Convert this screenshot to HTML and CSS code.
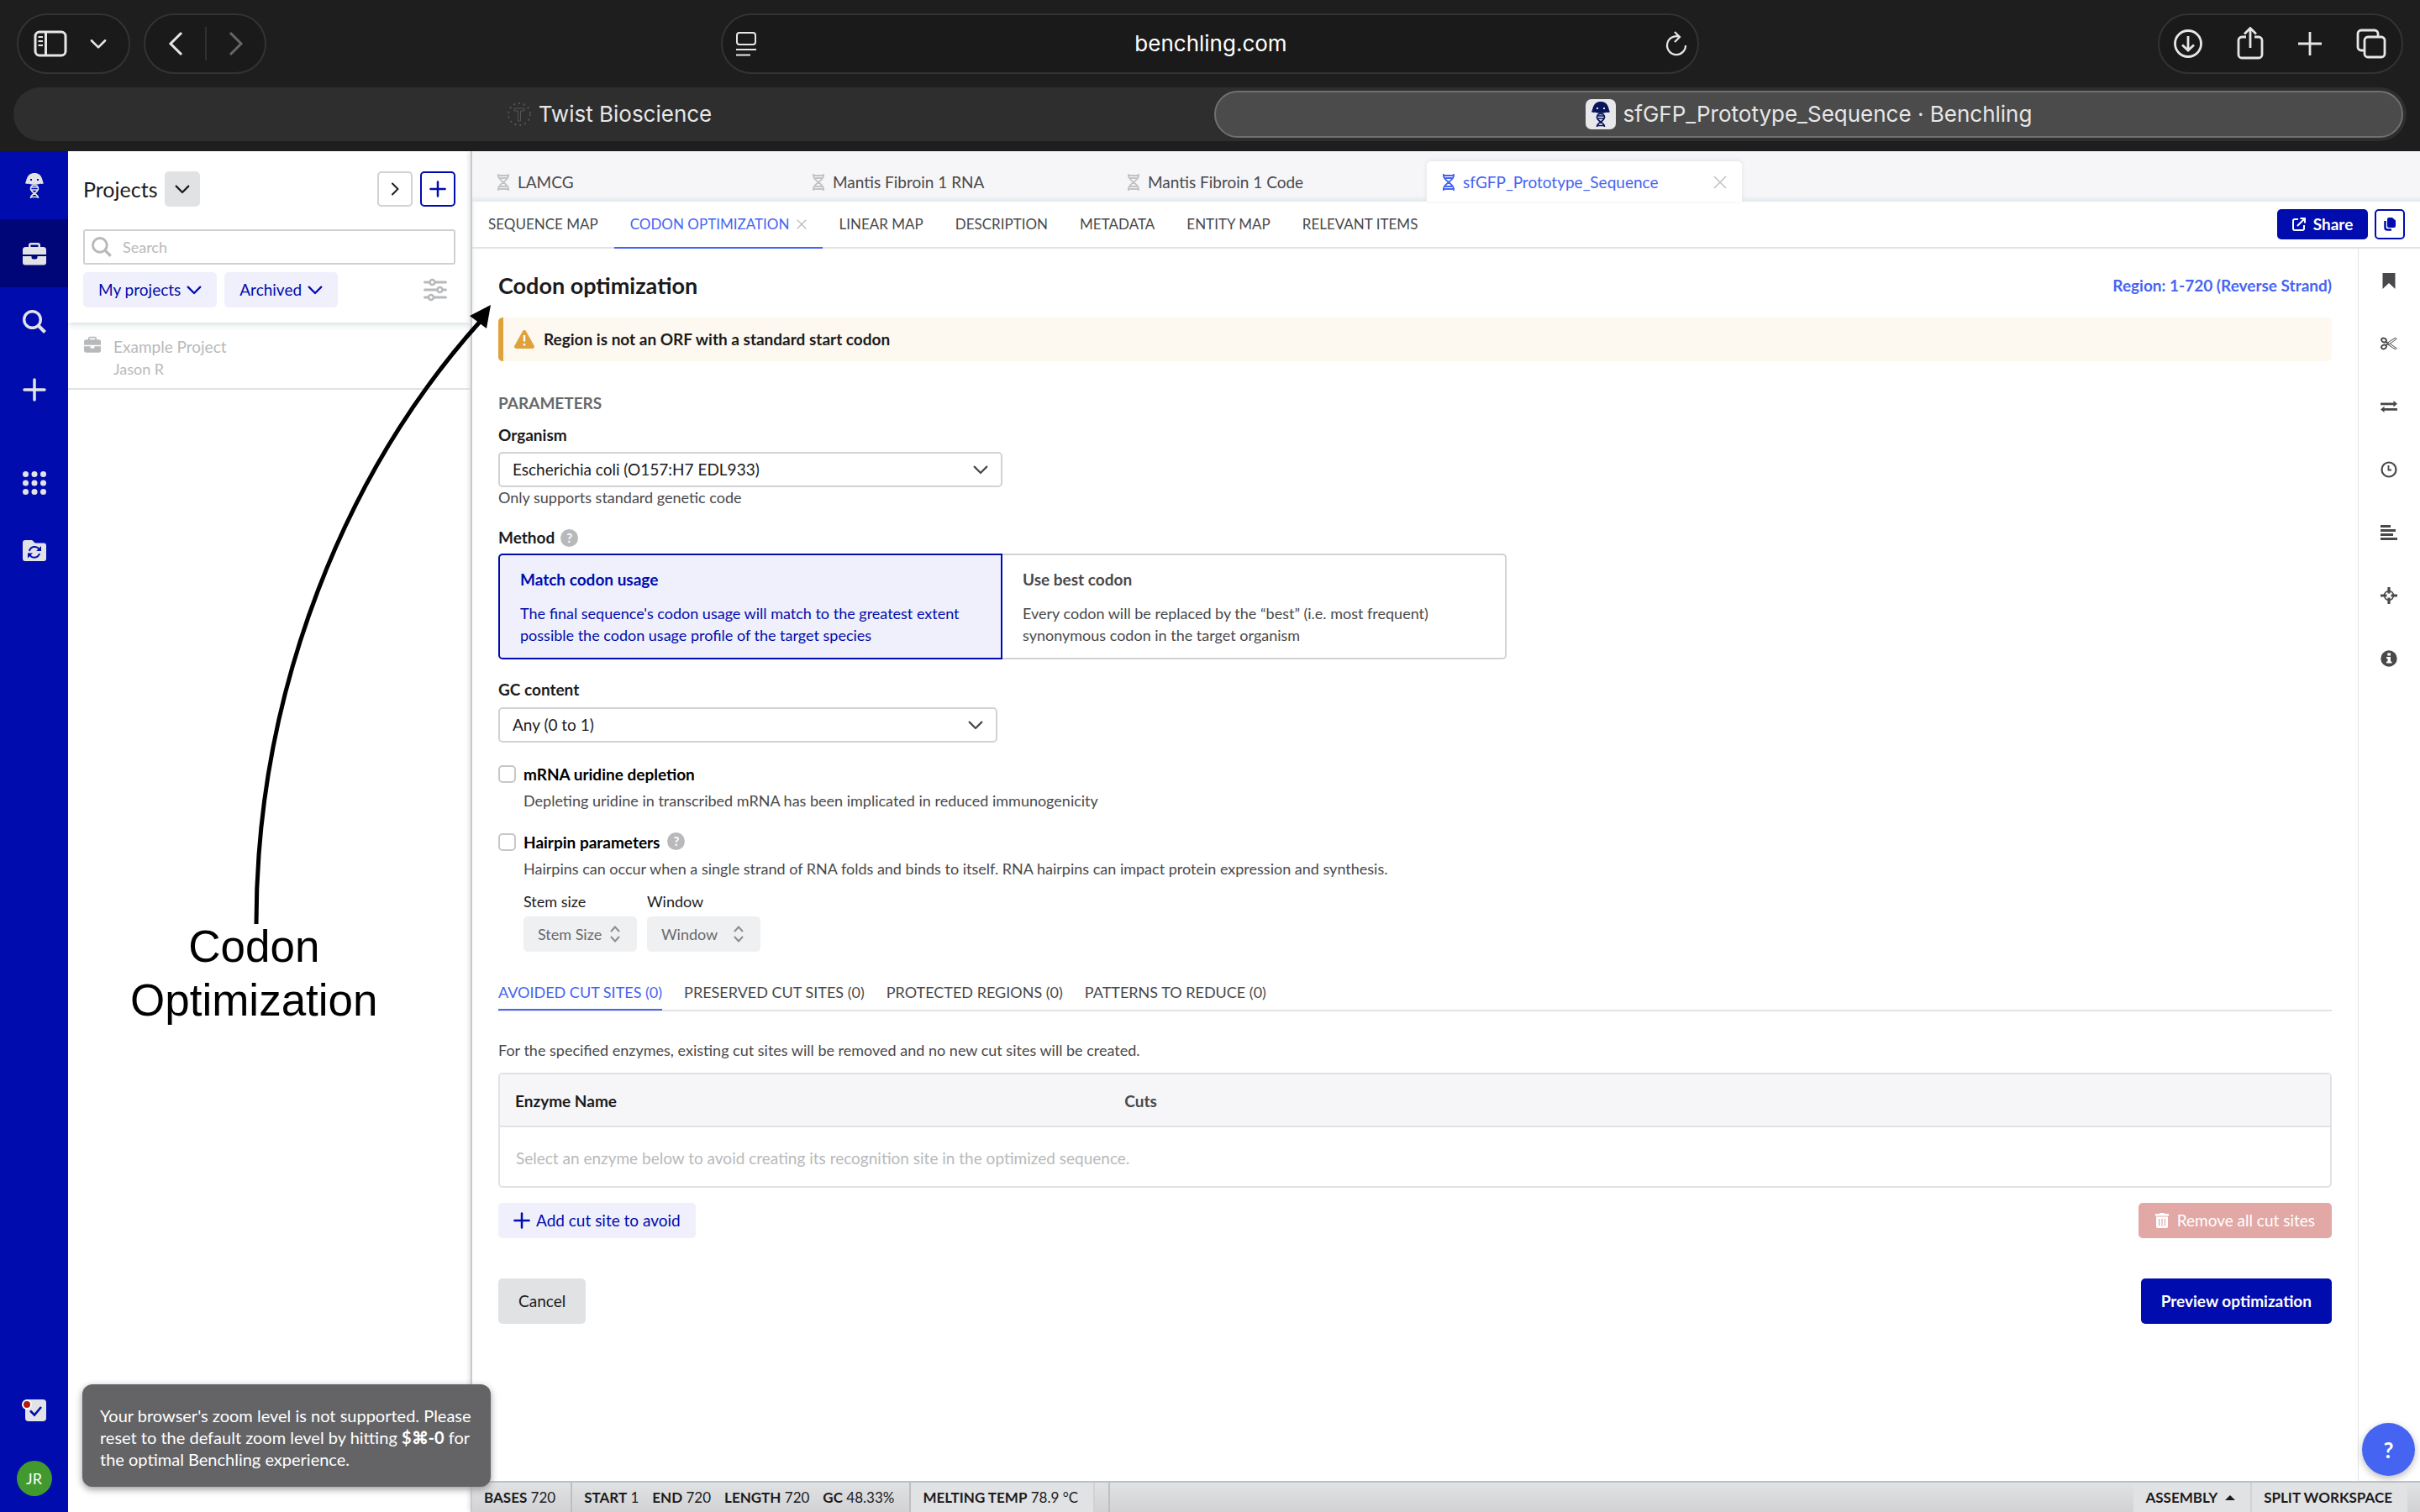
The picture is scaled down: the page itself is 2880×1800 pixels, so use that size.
FILE: index.html
```html
<!DOCTYPE html>
<html lang="en">
<head>
    <meta charset="UTF-8">
    <meta name="viewport" content="width=device-width, initial-scale=1.0">
    <title>sfGFP_Prototype_Sequence · Benchling</title>
    <link rel="stylesheet" href="styles.css">
</head>
<body>
    <!-- Shared icons -->
    <svg class="sprite" aria-hidden="true">
        <symbol id="i-chevron" viewBox="0 0 16 16"><path d="M1.500 5L8 11.500L14.500 5" fill="none" stroke="currentColor" stroke-width="2" stroke-linecap="round" stroke-linejoin="round"/></symbol>
        <symbol id="i-plus" viewBox="0 0 28 28"><path d="M14 2V26M2 14H26" fill="none" stroke="currentColor" stroke-width="3.500" stroke-linecap="round"/></symbol>
        <symbol id="i-close" viewBox="0 0 16 16"><path d="M1 1L15 15M15 1L1 15" fill="none" stroke="currentColor" stroke-width="1.600"/></symbol>
        <symbol id="i-search" viewBox="0 0 28 28"><circle cx="11.500" cy="11.500" r="9.800" fill="none" stroke="currentColor" stroke-width="3.400"/><path d="M18.500 18.500L26.500 26.500" stroke="currentColor" stroke-width="4"/></symbol>
        <symbol id="i-case" viewBox="0 0 28 28"><path fill="currentColor" fill-rule="evenodd" d="M7 6V4a3 3 0 0 1 3-3h8a3 3 0 0 1 3 3v2h3.500A3.500 3.500 0 0 1 28 9.500V15H0V9.500A3.500 3.500 0 0 1 3.500 6zM9.500 6h9V3.500h-9zM0 17h10.500v1.500a2 2 0 0 0 2 2h3a2 2 0 0 0 2-2V17H28v7.500a3 3 0 0 1-3 3H3a3 3 0 0 1-3-3z"/></symbol>
        <symbol id="i-dna" viewBox="0 0 16 20"><path d="M2 0V2.500C2 8 14 12 14 17.500V20M14 0V2.500C14 8 2 12 2 17.500V20M1 2H15M3 5H13M3 15H13M1 18H15" fill="none" stroke="currentColor" stroke-width="1.800"/></symbol>
        <symbol id="i-logo" viewBox="0 0 24 32"><path fill="currentColor" fill-rule="evenodd" d="M1 13C3 11 2 1 12 1s9 10 11 12c-1 1.500-4 .5-5 1-2 1-10 1-12 0-1-.5-4 .5-5-1zM7 8v2h2V8zM15 8v2h2V8z"/><path d="M7.500 31C7.500 25 16.500 25 16.500 19.500S7.500 14 7.500 19.500S16.500 25 16.500 31M8.500 18H15.500M8.500 21H15.500M8.500 29.500H15.500" fill="none" stroke="currentColor" stroke-width="1.700"/></symbol>
    </svg>

    <header class="browser">
        <div class="toolbar">
            <div class="toolbar-side">
                <div class="pill pill-sidebar">
                    <button aria-label="Show sidebar"><svg width="40" height="32" viewBox="0 0 40 32" fill="none" stroke="currentColor" stroke-width="3"><rect x="2" y="2" width="36" height="28" rx="5"/><path d="M14.500 2V30"/><path d="M5.500 8H11M5.500 13H11M5.500 18H11" stroke-width="2"/></svg></button>
                    <button aria-label="Tab groups"><svg width="20" height="20"><use href="#i-chevron"/></svg></button>
                </div>
                <div class="pill pill-nav">
                    <button aria-label="Back"><svg width="18" height="30" viewBox="0 0 18 30"><path d="M16 2L3 15L16 28" fill="none" stroke="currentColor" stroke-width="3"/></svg></button>
                    <button aria-label="Forward" disabled><svg width="18" height="30" viewBox="0 0 18 30"><path d="M2 2L15 15L2 28" fill="none" stroke="currentColor" stroke-width="3"/></svg></button>
                </div>
            </div>
            <div class="pill address">
                <button aria-label="Page menu"><svg width="24" height="30" viewBox="0 0 24 30" fill="none" stroke="currentColor" stroke-width="2"><rect x="1" y="2" width="22" height="14" rx="3"/><path d="M0 22H24M0 28.500H17"/></svg></button>
                <span class="address-text">benchling.com</span>
                <button aria-label="Reload"><svg width="26" height="30" viewBox="0 0 26 30" fill="none" stroke="currentColor" stroke-width="2.200"><path d="M16 6.500A11 11 0 1 0 24 17M11 1L17 7L11 13"/></svg></button>
            </div>
            <div class="toolbar-side toolbar-right">
                <div class="pill pill-actions">
                    <button aria-label="Downloads"><svg width="36" height="36" viewBox="0 0 36 36" fill="none" stroke="currentColor" stroke-width="2.800"><circle cx="18" cy="18" r="15.500"/><path d="M18 9V26M11 19.500L18 26L25 19.500"/></svg></button>
                    <button aria-label="Share page"><svg width="32" height="40" viewBox="0 0 32 40" fill="none" stroke="currentColor" stroke-width="2.800"><path d="M11 12H6a4 4 0 0 0-4 4V33a4 4 0 0 0 4 4H26a4 4 0 0 0 4-4V16a4 4 0 0 0-4-4H21M16 25V2M9 8.500L16 1.500L23 8.500"/></svg></button>
                    <button aria-label="New tab"><svg width="30" height="30" viewBox="0 0 30 30"><path d="M15 1V29M1 15H29" stroke="currentColor" stroke-width="2.800"/></svg></button>
                    <button aria-label="Tab overview"><svg width="36" height="36" viewBox="0 0 36 36" fill="none" stroke="currentColor" stroke-width="2.800"><rect x="10" y="10" width="24" height="24" rx="4"/><path d="M10 26H6a4 4 0 0 1-4-4V6a4 4 0 0 1 4-4H22a4 4 0 0 1 4 4v4"/></svg></button>
                </div>
            </div>
        </div>
        <nav class="browser-tabs">
            <a class="browser-tab" href="#"><svg class="twist" width="28" height="32" viewBox="0 0 28 32" fill="none" stroke="currentColor"><circle cx="14" cy="16" r="13" stroke-width="2" stroke-dasharray="2 4"/><path d="M8 9H20V12H15.500V24H12.500V12H8Z"/></svg>Twist Bioscience</a>
            <a class="browser-tab active" href="#"><span class="favicon"><svg width="24" height="34"><use href="#i-logo"/></svg></span>sfGFP_Prototype_Sequence · Benchling</a>
        </nav>
    </header>

    <div class="app">
        <nav class="rail">
            <a href="#" aria-label="Home"><svg width="24" height="32"><use href="#i-logo"/></svg></a>
            <a href="#" class="current" aria-label="Projects"><svg width="28" height="28"><use href="#i-case"/></svg></a>
            <a href="#" aria-label="Search"><svg width="28" height="28"><use href="#i-search"/></svg></a>
            <a href="#" aria-label="Create"><svg width="28" height="28"><use href="#i-plus"/></svg></a>
            <a href="#" class="spaced" aria-label="Apps"><svg width="28" height="28" viewBox="0 0 28 28" fill="currentColor"><circle cx="3.500" cy="3.500" r="3.500"/><circle cx="14" cy="3.500" r="3.500"/><circle cx="24.500" cy="3.500" r="3.500"/><circle cx="3.500" cy="14" r="3.500"/><circle cx="14" cy="14" r="3.500"/><circle cx="24.500" cy="14" r="3.500"/><circle cx="3.500" cy="24.500" r="3.500"/><circle cx="14" cy="24.500" r="3.500"/><circle cx="24.500" cy="24.500" r="3.500"/></svg></a>
            <a href="#" aria-label="Sync folder"><svg width="28" height="26" viewBox="0 0 28 26"><path fill="currentColor" d="M3 0H10.500C12.500 0 13.500 3.500 15.500 3.500H25a3 3 0 0 1 3 3V22a3 3 0 0 1-3 3H3a3 3 0 0 1-3-3V3a3 3 0 0 1 3-3z"/><path d="M8 13a6.500 6.500 0 0 1 11.500-2.500M20 16a6.500 6.500 0 0 1-11.500 2" fill="none" stroke="#000cad" stroke-width="2"/><path fill="#000cad" d="M22 7V13H16zM6 21.500V15.500H12z"/></svg></a>
            <a href="#" class="tasks" aria-label="Notifications"><svg width="30" height="28" viewBox="0 0 30 28"><rect x="4" y="1" width="25" height="26" rx="4" fill="currentColor"/><path d="M10 14.500L15 19.500L23 10" fill="none" stroke="#000cad" stroke-width="2.600"/><circle cx="6" cy="7" r="5" fill="#b01c12" stroke="#fff" stroke-width="2"/></svg></a>
            <a href="#" class="account" aria-label="Account"><span class="avatar">JR</span></a>
        </nav>

        <aside class="projects">
            <div class="projects-head">
                <div class="projects-title">
                    <h2>Projects</h2>
                    <button class="square grey" aria-label="Switch list"><svg width="18" height="18"><use href="#i-chevron"/></svg></button>
                    <button class="square outline push" aria-label="Expand"><svg class="turn" width="16" height="16"><use href="#i-chevron"/></svg></button>
                    <button class="square blue" aria-label="New project"><svg width="20" height="20"><use href="#i-plus"/></svg></button>
                </div>
                <label class="search">
                    <svg width="24" height="24"><use href="#i-search"/></svg>
                    <input type="text" placeholder="Search" aria-label="Search projects">
                </label>
                <div class="filters">
                    <button class="soft">My projects <svg width="18" height="18"><use href="#i-chevron"/></svg></button>
                    <button class="soft">Archived <svg width="18" height="18"><use href="#i-chevron"/></svg></button>
                    <button class="sliders" aria-label="Filters"><svg width="28" height="28" viewBox="0 0 28 28" fill="none" stroke="currentColor" stroke-width="3" stroke-linecap="round"><path d="M1.500 5H6M15 5H26.500M1.500 14H15M24 14H26.500M1.500 23H5M13 23H26.500"/><circle cx="10.500" cy="5" r="3" stroke-width="2.500"/><circle cx="19.500" cy="14" r="3" stroke-width="2.500"/><circle cx="9" cy="23" r="3" stroke-width="2.500"/></svg></button>
                </div>
            </div>
            <a href="#" class="project">
                <svg width="20" height="20"><use href="#i-case"/></svg>
                <span class="project-text"><span class="project-name">Example Project</span><span>Jason R</span></span>
            </a>
        </aside>

        <main class="workspace">
            <nav class="file-tabs">
                <a href="#" class="file-tab"><svg width="16" height="20"><use href="#i-dna"/></svg>LAMCG</a>
                <a href="#" class="file-tab"><svg width="16" height="20"><use href="#i-dna"/></svg>Mantis Fibroin 1 RNA</a>
                <a href="#" class="file-tab"><svg width="16" height="20"><use href="#i-dna"/></svg>Mantis Fibroin 1 Code</a>
                <a href="#" class="file-tab active"><svg width="16" height="20"><use href="#i-dna"/></svg>sfGFP_Prototype_Sequence<svg class="close" width="16" height="16"><use href="#i-close"/></svg></a>
            </nav>
            <div class="subnav">
                <nav class="views">
                    <a href="#">SEQUENCE MAP</a>
                    <a href="#" class="active">CODON OPTIMIZATION<svg width="12" height="12"><use href="#i-close"/></svg></a>
                    <a href="#">LINEAR MAP</a>
                    <a href="#">DESCRIPTION</a>
                    <a href="#">METADATA</a>
                    <a href="#">ENTITY MAP</a>
                    <a href="#">RELEVANT ITEMS</a>
                </nav>
                <button class="share"><svg width="16" height="16" viewBox="0 0 16 16" fill="none" stroke="currentColor" stroke-width="2"><path d="M7 2H3A2 2 0 0 0 1 4V13A2 2 0 0 0 3 15H12A2 2 0 0 0 14 13V9M9.500 1H15V6.500M15 1L6 10"/></svg>Share</button>
                <button class="copy" aria-label="Copy"><svg width="16" height="16" viewBox="0 0 16 16" fill="currentColor"><path d="M7 0H11L15 3.500V10a2 2 0 0 1-2 2H7a2 2 0 0 1-2-2V2a2 2 0 0 1 2-2z"/><path d="M2.500 4V12a2.500 2.500 0 0 0 2.500 2.500H10" fill="none" stroke="currentColor" stroke-width="2.500"/></svg></button>
            </div>

            <div class="work-row">
                <form class="content">
                    <div class="title-row">
                        <h1>Codon optimization</h1>
                        <a href="#">Region: 1-720 (Reverse Strand)</a>
                    </div>
                    <div class="alert" role="alert">
                        <svg width="24" height="22" viewBox="0 0 24 22"><path d="M12 0C13 0 13.600.6 14 1.300L23.600 18.500C24.500 20.200 23.500 22 21.700 22H2.300C.5 22-.5 20.200.4 18.500L10 1.300C10.400.6 11 0 12 0Z" fill="#dfa23a"/><path d="M12 6V13.500M12 16V18.600" stroke="#fff" stroke-width="2.400"/></svg>
                        Region is not an ORF with a standard start codon
                    </div>

                    <h3>PARAMETERS</h3>
                    <label class="field-label" for="organism">Organism</label>
                    <div class="select organism">
                        <select id="organism"><option>Escherichia coli (O157:H7 EDL933)</option></select>
                        <svg width="18" height="18"><use href="#i-chevron"/></svg>
                    </div>
                    <p class="hint">Only supports standard genetic code</p>

                    <div class="method-label">Method <button type="button" class="help" aria-label="About method">?</button></div>
                    <div class="methods">
                        <label class="method selected">
                            <input type="radio" name="method" checked>
                            <strong>Match codon usage</strong>
                            <span>The final sequence's codon usage will match to the greatest extent<br>possible the codon usage profile of the target species</span>
                        </label>
                        <label class="method">
                            <input type="radio" name="method">
                            <strong>Use best codon</strong>
                            <span>Every codon will be replaced by the “best” (i.e. most frequent)<br>synonymous codon in the target organism</span>
                        </label>
                    </div>

                    <label class="field-label gc-label" for="gc">GC content</label>
                    <div class="select gc">
                        <select id="gc"><option>Any (0 to 1)</option></select>
                        <svg width="18" height="18"><use href="#i-chevron"/></svg>
                    </div>

                    <div class="option">
                        <input type="checkbox" id="uridine">
                        <label for="uridine">mRNA uridine depletion</label>
                    </div>
                    <p class="option-text">Depleting uridine in transcribed mRNA has been implicated in reduced immunogenicity</p>
                    <div class="option">
                        <input type="checkbox" id="hairpin">
                        <label for="hairpin">Hairpin parameters</label>
                        <button type="button" class="help" aria-label="About hairpins">?</button>
                    </div>
                    <p class="option-text">Hairpins can occur when a single strand of RNA folds and binds to itself. RNA hairpins can impact protein expression and synthesis.</p>
                    <div class="numbers">
                        <div class="number">
                            <label for="stem">Stem size</label>
                            <div class="number-box">
                                <input id="stem" type="number" placeholder="Stem Size" disabled>
                                <svg width="16" height="22" viewBox="0 0 16 22"><path d="M3 8L8 2.500L13 8M3 14L8 19.500L13 14" fill="none" stroke="#8c8c8e" stroke-width="2"/></svg>
                            </div>
                        </div>
                        <div class="number">
                            <label for="window">Window</label>
                            <div class="number-box">
                                <input id="window" type="number" placeholder="Window" disabled>
                                <svg width="16" height="22" viewBox="0 0 16 22"><path d="M3 8L8 2.500L13 8M3 14L8 19.500L13 14" fill="none" stroke="#8c8c8e" stroke-width="2"/></svg>
                            </div>
                        </div>
                    </div>

                    <nav class="site-tabs">
                        <a href="#" class="active">AVOIDED CUT SITES (0)</a>
                        <a href="#">PRESERVED CUT SITES (0)</a>
                        <a href="#">PROTECTED REGIONS (0)</a>
                        <a href="#">PATTERNS TO REDUCE (0)</a>
                    </nav>
                    <p class="site-text">For the specified enzymes, existing cut sites will be removed and no new cut sites will be created.</p>
                    <div class="table-wrap">
                        <table>
                            <thead>
                                <tr><th class="name">Enzyme Name</th><th class="cuts">Cuts</th></tr>
                            </thead>
                            <tbody>
                                <tr><td colspan="2">Select an enzyme below to avoid creating its recognition site in the optimized sequence.</td></tr>
                            </tbody>
                        </table>
                    </div>
                    <div class="actions">
                        <button type="button" class="soft add"><svg width="20" height="20"><use href="#i-plus"/></svg>Add cut site to avoid</button>
                        <button type="button" class="remove" disabled><svg width="16" height="18" viewBox="0 0 16 18"><path fill="currentColor" fill-rule="evenodd" d="M5.500 0H10.500L11 1H16V3.500H0V1H5zM1 4.500H15V16a2 2 0 0 1-2 2H3a2 2 0 0 1-2-2zM4 7V15.500H5.200V7zM7.400 7V15.500H8.600V7zM10.800 7V15.500H12V7z"/></svg>Remove all cut sites</button>
                    </div>
                    <div class="actions footer">
                        <button type="button" class="cancel">Cancel</button>
                        <button type="submit" class="preview">Preview optimization</button>
                    </div>
                </form>

                <nav class="tools">
                    <a href="#" aria-label="Bookmarks"><svg viewBox="0 0 20 20"><path d="M2.500 1H17.500V20L10 13L2.500 20Z" fill="currentColor"/></svg></a>
                    <a href="#" aria-label="Digests"><svg viewBox="0 0 20 20" fill="none" stroke="currentColor"><ellipse cx="4" cy="6" rx="3" ry="2.300" stroke-width="1.900" transform="rotate(25 4 6)"/><ellipse cx="4" cy="14" rx="3" ry="2.300" stroke-width="1.900" transform="rotate(-25 4 14)"/><path d="M6.500 8L9.500 10M6.500 12L9.500 10" stroke-width="1.600"/><path d="M8.500 9L17 3.500C18.500 3 19.500 4 19 4.500L9.500 11.500M8.500 11L17 16.500C18.500 17 19.500 16 19 15.500L11 10" stroke-width="1"/></svg></a>
                    <a href="#" aria-label="Primers"><svg viewBox="0 0 20 20" fill="currentColor"><path d="M0 5.500H15.500V3L20 6.700L15.500 10.500V8.300H0zM20 12H4.500V9.700L0 13.500L4.500 17V14.800H20z"/></svg></a>
                    <a href="#" aria-label="History"><svg viewBox="0 0 20 20" fill="none" stroke="currentColor"><circle cx="10" cy="10" r="8.500" stroke-width="2.200"/><path d="M9.500 5V10.500H13" stroke-width="1.800"/></svg></a>
                    <a href="#" aria-label="Alignments"><svg viewBox="0 0 20 20" stroke="currentColor" stroke-width="3"><path d="M0 2.500H12M0 7.500H18M0 12.500H15M0 17.500H20"/></svg></a>
                    <a href="#" aria-label="Target"><svg viewBox="0 0 20 20" fill="none" stroke="currentColor"><circle cx="10" cy="10" r="5.500" stroke-width="1.500"/><path d="M10 0V7.500M10 12.500V20M0 10H7.500M12.500 10H20" stroke-width="3.200"/></svg></a>
                    <a href="#" aria-label="Information"><svg viewBox="0 0 20 20"><circle cx="10" cy="10" r="9.700" fill="currentColor"/><path d="M8.300 3.500H12V6.500H8.300zM7 8H12V13.500H13.500V15.500H7V13.500H8.500V10H7z" fill="#fff"/></svg></a>
                </nav>
            </div>

            <footer class="status">
                <span class="cell"><span><b>BASES</b> 720</span></span>
                <span class="cell"><span><b>START</b> 1</span><span><b>END</b> 720</span><span><b>LENGTH</b> 720</span><span><b>GC</b> 48.33%</span></span>
                <button class="cell light"><span><b>MELTING TEMP</b> 78.9 °C</span></button>
                <span class="cell spacer"></span>
                <button class="cell light right"><b>ASSEMBLY</b><svg width="12" height="6" viewBox="0 0 12 6"><path d="M0 6L6 0L12 6z" fill="currentColor"/></svg></button>
                <button class="cell light last"><b>SPLIT WORKSPACE</b></button>
            </footer>
        </main>
    </div>

    <div class="toast">Your browser's zoom level is not supported. Please reset to the default zoom level by hitting <b>$⌘-0</b> for the optimal Benchling experience.</div>
    <button class="fab" aria-label="Help">?</button>

    <!-- Callout drawn over the page -->
    <svg class="callout-arrow" width="600" height="1110" viewBox="0 0 600 1110"><path d="M305 1100C305 820 412 560 572 382" fill="none" stroke="#000" stroke-width="5"/><path d="M584 363L579 391L559 376Z"/></svg>
    <div class="callout-text">Codon<br>Optimization</div>
</body>
</html>
```
FILE: styles.css
```css
/* Basic Reset */
* {
    box-sizing: border-box;
}

body {
    margin: 0;
    min-height: 100vh;
    display: flex;
    flex-direction: column;
    position: relative;
    background-color: #fff;
    color: #1b1b1d;
    font-family: Lato, "Noto Sans", sans-serif;
    font-size: 18px;
    line-height: 24px;
}

h1, h2, h3, p {
    margin: 0;
}

a {
    color: inherit;
    text-decoration: none;
}

button, input, select {
    font: inherit;
    color: inherit;
    margin: 0;
}

button {
    display: inline-flex;
    align-items: center;
    justify-content: center;
    padding: 0;
    border: none;
    background: none;
    cursor: pointer;
}

svg {
    flex: none;
}

.sprite {
    position: absolute;
    width: 0;
    height: 0;
}

/* Browser window */
.browser {
    position: relative;
    z-index: 1;
    height: 180px;
    background-color: #1e1e1e;
    color: #e6e6e6;
    font-family: Inter, sans-serif;
    font-size: 26px;
}

.toolbar {
    display: flex;
    align-items: center;
    justify-content: space-between;
    height: 104px;
    padding: 0 20px;
}

.toolbar-side {
    display: flex;
    flex: 1;
    gap: 16px;
}

.toolbar-right {
    justify-content: flex-end;
}

.pill {
    display: flex;
    align-items: center;
    height: 72px;
    border: 2px solid #333;
    border-radius: 36px;
    background-color: #1a1a1a;
}

.pill-sidebar {
    gap: 27px;
    padding: 0 26px 0 18px;
}

.pill-nav button {
    width: 71px;
    height: 40px;
}

.pill-nav button + button {
    border-left: 2px solid #303030;
    color: #666;
}

.address {
    flex: none;
    width: 41%;
    padding: 0 12px 0 16px;
}

.address-text {
    flex: 1;
    text-align: center;
    color: #fff;
}

.pill-actions {
    gap: 40px;
    padding: 0 18px 0 16px;
}

.browser-tabs {
    display: flex;
    gap: 14px;
    height: 64px;
    margin: 0 16px;
    padding: 4px;
    border-radius: 32px;
    background-color: #2e2e2e;
}

.browser-tab {
    display: flex;
    flex: 1;
    align-items: center;
    justify-content: center;
    gap: 9px;
    border-radius: 28px;
}

.browser-tab.active {
    border: 2px solid #707070;
    background-color: #4b4b4b;
}

.twist {
    color: #555;
}

.favicon {
    display: flex;
    align-items: center;
    justify-content: center;
    width: 36px;
    height: 36px;
    border-radius: 7px;
    background-color: #e8e8ea;
    color: #06155c;
}

/* App shell */
.app {
    display: flex;
    flex: 1;
}

.rail {
    display: flex;
    flex: none;
    flex-direction: column;
    position: relative;
    z-index: 1;
    width: 81px;
    background-color: #000cad;
    color: #e2e3e6;
}

.rail a {
    display: flex;
    align-items: center;
    justify-content: center;
    height: 81px;
}

.rail .current {
    background-color: #000678;
}

.rail .spaced {
    margin-top: 30px;
}

.rail .tasks {
    margin-top: auto;
}

.avatar {
    width: 42px;
    height: 42px;
    border-radius: 50%;
    background-color: #429a2f;
    color: #fff;
    text-align: center;
    line-height: 42px;
}

/* Projects panel */
.projects {
    flex: none;
    width: 479px;
}

.projects-head {
    padding: 24px 18px 18px;
    box-shadow: 0 2px 8px #cfdedf;
}

.projects-title {
    display: flex;
    align-items: center;
    gap: 9px;
    height: 42px;
}

.projects-title h2 {
    font-size: 25px;
    font-weight: 400;
}

.square {
    width: 42px;
    height: 42px;
    border-radius: 5px;
}

.square.grey {
    background-color: #e1e2e4;
}

.square.outline {
    border: 2px solid #d2d2d4;
}

.square.blue {
    border: 2px solid #000cad;
    color: #000cad;
}

.push {
    margin-left: auto;
}

.turn {
    transform: rotate(-90deg);
}

.search {
    display: flex;
    align-items: center;
    gap: 13px;
    height: 42px;
    margin-top: 27px;
    padding: 0 8px;
    border: 2px solid #d0d0d2;
    border-radius: 3px;
    color: #b8b9bb;
}

.search input {
    flex: 1;
    min-width: 0;
    padding: 0;
    border: none;
    outline: none;
    background: none;
}

input::placeholder {
    color: inherit;
    opacity: 1;
}

.filters {
    display: flex;
    gap: 9px;
    margin-top: 9px;
}

.soft {
    gap: 7px;
    height: 42px;
    padding: 0 18px;
    border-radius: 5px;
    background-color: #f0f0fc;
    color: #000cad;
    font-size: 19px;
}

.sliders {
    margin-left: auto;
    padding-right: 10px;
    color: #b8b9bb;
}

.project {
    display: flex;
    gap: 15px;
    padding: 16px 19px 10px;
    border-bottom: 2px solid #e1e2e4;
    color: #b8b9bb;
}

.project-text {
    display: flex;
    flex-direction: column;
    line-height: 26px;
}

.project-name {
    font-size: 19px;
}

/* Workspace */
.workspace {
    display: flex;
    flex: 1;
    flex-direction: column;
    min-width: 0;
    border-left: 2px solid #c9cad0;
    box-shadow: -1px 0 6px #d8d8de;
}

.file-tabs {
    display: flex;
    height: 60px;
    padding: 12px 11px 0;
    background: linear-gradient(#f6f6f9 88%, #e3e8ec);
    color: #49494b;
    font-size: 19px;
}

.file-tab {
    display: flex;
    align-items: center;
    gap: 9px;
    width: 375px;
    padding: 2px 18px 0;
}

.file-tab svg {
    color: #c2c3c5;
}

.file-tab.active {
    border-radius: 5px 5px 0 0;
    background-color: #fff;
    color: #4664f2;
    box-shadow: 0 -1px 5px #e1e1e6;
}

.file-tab.active svg {
    color: #4664f2;
}

.file-tab.active .close {
    margin-left: auto;
    color: #c2c3c5;
}

.subnav {
    display: flex;
    align-items: center;
    gap: 8px;
    height: 56px;
    padding-right: 18px;
    border-bottom: 2px solid #e1e2e4;
    color: #49494b;
}

.views {
    display: flex;
    flex: 1;
    align-self: stretch;
    font-size: 17px;
}

.views a {
    display: flex;
    align-items: center;
    gap: 9px;
    margin-bottom: -2px;
    padding: 0 19px;
    border-bottom: 2px solid transparent;
}

.views .active {
    border-color: #4664f2;
    color: #4664f2;
}

.views svg {
    color: #b8b9bb;
}

.share {
    gap: 9px;
    width: 108px;
    height: 36px;
    border-radius: 5px;
    background-color: #000cad;
    color: #fff;
    font-size: 19px;
    font-weight: 700;
}

.copy {
    width: 36px;
    height: 36px;
    border: 2px solid #000cad;
    border-radius: 5px;
    color: #000cad;
}

.work-row {
    display: flex;
    flex: 1;
}

.content {
    flex: 1;
    min-width: 0;
    padding: 24px 31px 60px;
}

.title-row {
    display: flex;
    align-items: center;
    justify-content: space-between;
    height: 40px;
}

.title-row h1 {
    font-size: 27px;
}

.title-row a {
    color: #4664f2;
    font-size: 19px;
    font-weight: 700;
}

.alert {
    display: flex;
    align-items: center;
    gap: 11px;
    height: 52px;
    margin-top: 18px;
    padding: 0 13px;
    border-left: 6px solid #dfa23a;
    border-radius: 5px;
    background-color: #fdf8f0;
    font-size: 19px;
    font-weight: 700;
}

/* Parameters */
h3 {
    margin-top: 38px;
    color: #68696b;
    font-size: 19px;
}

.field-label {
    display: block;
    margin: 14px 0 8px;
    font-size: 19px;
    font-weight: 700;
}

.gc-label {
    margin: 24px 0 9px;
}

.select {
    position: relative;
    max-width: 600px;
}

.gc {
    max-width: 594px;
}

.select select {
    width: 100%;
    height: 42px;
    padding: 0 15px;
    border: 2px solid #d2d2d4;
    border-radius: 5px;
    background-color: #fff;
    font-size: 19px;
    appearance: none;
}

.select svg {
    position: absolute;
    top: 12px;
    right: 17px;
    color: #49494b;
}

.hint, .option-text, .site-text {
    color: #49494b;
}

.method-label {
    display: flex;
    align-items: center;
    gap: 7px;
    margin: 24px 0 7px;
    font-size: 19px;
    font-weight: 700;
}

.help {
    width: 21px;
    height: 21px;
    border-radius: 50%;
    background-color: #b8b9bb;
    color: #fff;
    font-size: 15px;
    line-height: 21px;
}

.methods {
    display: grid;
    grid-template-columns: 1fr 1fr;
    max-width: 1200px;
}

.method {
    padding: 16px 24px 14px;
    border: 2px solid #d2d2d4;
    border-left: none;
    border-radius: 0 5px 5px 0;
    color: #49494b;
    line-height: 26px;
}

.method.selected {
    border: 2px solid #000cad;
    border-radius: 5px 0 0 5px;
    background-color: #f0f0fc;
    color: #000cad;
}

.method input {
    position: absolute;
    opacity: 0;
}

.method strong {
    display: block;
    margin-bottom: 14px;
    font-size: 19px;
}

.option {
    display: flex;
    gap: 9px;
    margin-top: 26px;
    color: #000;
    font-size: 19px;
    font-weight: 700;
}

.option input {
    width: 21px;
    height: 21px;
    margin-top: 1px;
    border: 2px solid #c6c7c9;
    border-radius: 5px;
    appearance: none;
}

.option-text {
    margin: 7px 0 0 30px;
}

.numbers {
    display: flex;
    gap: 12px;
    margin: 15px 0 0 30px;
}

.number-box {
    display: flex;
    align-items: center;
    width: 135px;
    height: 42px;
    margin-top: 6px;
    padding: 0 18px 0 17px;
    border-radius: 5px;
    background-color: #eff0f2;
    color: #68696b;
}

.number-box input {
    flex: 1;
    min-width: 0;
    padding: 0;
    border: none;
    background: none;
    appearance: textfield;
}

.number-box input::-webkit-inner-spin-button {
    display: none;
}

/* Cut sites */
.site-tabs {
    display: flex;
    gap: 26px;
    margin-top: 36px;
    border-bottom: 2px solid #e1e2e4;
    color: #49494b;
}

.site-tabs a {
    margin-bottom: -1px;
    padding-bottom: 8px;
    border-bottom: 2px solid transparent;
}

.site-tabs .active {
    border-color: #4664f2;
    color: #4664f2;
}

.site-text {
    margin: 34px 0 15px;
}

.table-wrap {
    border: 2px solid #e1e2e4;
    border-radius: 5px;
}

table {
    width: 100%;
    border-collapse: collapse;
    font-size: 19px;
}

th {
    height: 62px;
    padding: 2px 18px 0;
    border-bottom: 2px solid #e1e2e4;
    background-color: #f6f6f9;
    text-align: left;
}

th.name {
    width: 33.3%;
}

th.cuts {
    color: #49494b;
}

td {
    height: 71px;
    padding: 4px 19px 0;
    color: #b8b9bb;
}

.actions {
    display: flex;
    justify-content: space-between;
    margin-top: 18px;
}

.footer {
    margin-top: 48px;
}

.remove {
    gap: 10px;
    height: 42px;
    padding: 0 20px;
    border-radius: 5px;
    background-color: #e2a8a6;
    color: #fff;
    font-size: 19px;
}

.cancel, .preview {
    height: 54px;
    padding: 0 24px;
    border-radius: 5px;
    background-color: #e1e2e4;
    font-size: 19px;
}

.preview {
    background-color: #000cad;
    color: #fff;
    font-weight: 700;
}

.tools {
    flex: none;
    width: 74px;
    padding-right: 2px;
    border-left: 1px solid #e1e2e4;
    color: #49494b;
}

.tools a {
    display: flex;
    align-items: center;
    justify-content: center;
    height: 75px;
}

.tools svg {
    width: 20px;
    height: 20px;
}

/* Status bar */
.status {
    display: flex;
    height: 37px;
    border-top: 2px solid #bbc0c4;
    background: linear-gradient(#e1e2e4, #d2d2d4);
    font-size: 17px;
}

.cell {
    display: flex;
    align-items: center;
    gap: 16px;
    padding: 0 18px 0 14px;
    border-right: 2px solid #bbc0c4;
}

.light {
    border-color: #d2d2d4;
    background-color: #e1e2e4;
}

.spacer {
    padding: 0 8px;
}

.right {
    gap: 9px;
    margin-left: auto;
}

.last {
    margin-right: 15px;
    border: none;
}

/* Floating items */
.toast {
    position: absolute;
    z-index: 2;
    left: 98px;
    bottom: 30px;
    width: 486px;
    padding: 24px 10px 20px 21px;
    border-radius: 12px;
    background-color: #646466;
    box-shadow: 0 3px 8px #999;
    color: #fff;
    font-size: 20px;
    line-height: 26px;
}

.fab {
    position: absolute;
    right: 6px;
    bottom: 43px;
    width: 63px;
    height: 63px;
    border-radius: 50%;
    background-color: #4664f2;
    box-shadow: 0 3px 8px #bbb;
    color: #fff;
    font-size: 26px;
    font-weight: 700;
}

.callout-arrow {
    position: absolute;
    top: 0;
    left: 0;
    pointer-events: none;
}

.callout-text {
    position: absolute;
    top: 1095px;
    left: 155px;
    color: #000;
    font-family: "Liberation Sans", Arial, sans-serif;
    font-size: 53px;
    line-height: 64px;
    text-align: center;
}
```
